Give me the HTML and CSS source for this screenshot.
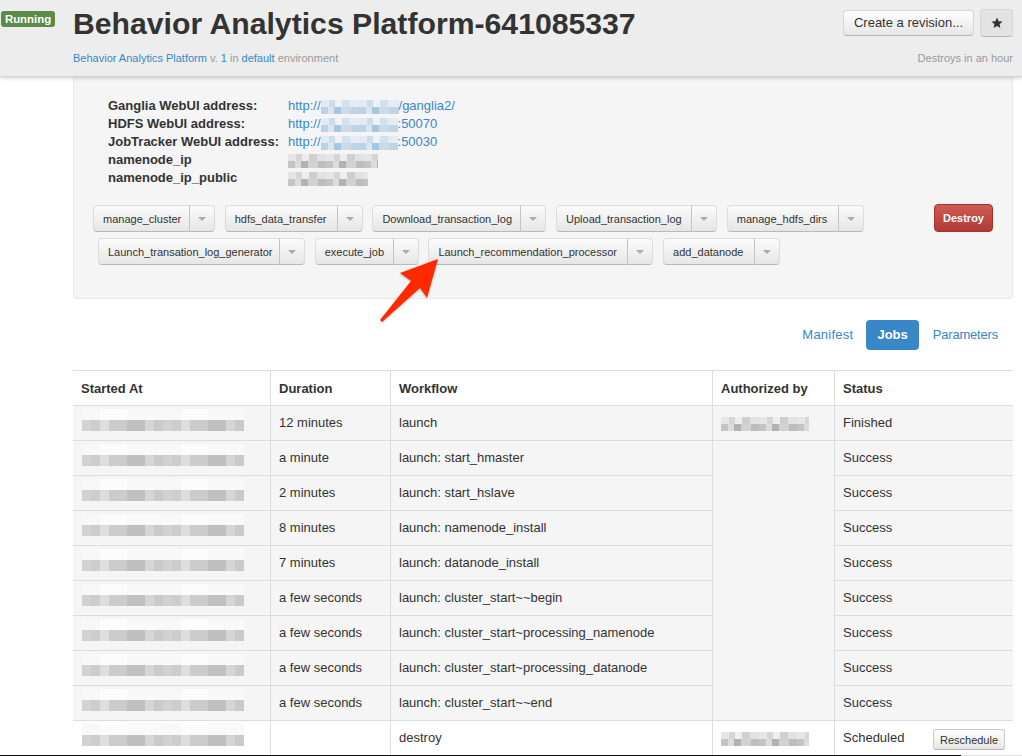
FILE: index.html
```html
<!DOCTYPE html>
<html lang="en">
<head>
    <meta charset="UTF-8">
    <title>Behavior Analytics Platform-641085337</title>
    <link rel="stylesheet" href="styles.css">
</head>
<body>
<div class="page">
    <header class="top">
        <div class="status-col"><span class="badge">Running</span></div>
        <div class="top-main">
            <h1>Behavior Analytics Platform-641085337</h1>
            <p class="sub"><a href="#">Behavior Analytics Platform</a> v. <a href="#">1</a> in <a href="#">default</a> environment</p>
        </div>
        <div class="top-side">
            <div class="top-buttons">
                <button class="btn btn-revision">Create a revision...</button>
                <button class="btn btn-star" aria-label="Favourite">
                    <svg width="12" height="12" viewBox="0 0 12 12"><polygon points="6,0.6 7.6,4.2 11.5,4.6 8.6,7.2 9.4,11.1 6,9.1 2.6,11.1 3.4,7.2 0.5,4.6 4.4,4.2" fill="#333"/></svg>
                </button>
            </div>
            <p class="destroys">Destroys in an hour</p>
        </div>
    </header>

    <section class="well">
        <div class="info">
            <div class="info-row"><b>Ganglia WebUI address:</b><span><a href="#">http://<i class="blur blur-blue w-ganglia"></i>/ganglia2/</a></span></div>
            <div class="info-row"><b>HDFS WebUI address:</b><span><a href="#">http://<i class="blur blur-blue w-port"></i>:50070</a></span></div>
            <div class="info-row"><b>JobTracker WebUI address:</b><span><a href="#">http://<i class="blur blur-blue w-port"></i>:50030</a></span></div>
            <div class="info-row"><b>namenode_ip</b><span><i class="blur w-ip"></i></span></div>
            <div class="info-row"><b>namenode_ip_public</b><span><i class="blur w-ip-public"></i></span></div>
        </div>
        <div class="actions">
            <div class="action-row">
                <div class="split"><button class="a-cluster">manage_cluster</button><button class="caret-btn"><span class="caret"></span></button></div>
                <div class="split"><button class="a-hdfs">hdfs_data_transfer</button><button class="caret-btn"><span class="caret"></span></button></div>
                <div class="split"><button class="a-download">Download_transaction_log</button><button class="caret-btn"><span class="caret"></span></button></div>
                <div class="split"><button class="a-upload">Upload_transaction_log</button><button class="caret-btn"><span class="caret"></span></button></div>
                <div class="split"><button class="a-dirs">manage_hdfs_dirs</button><button class="caret-btn"><span class="caret"></span></button></div>
                <button class="btn-danger">Destroy</button>
            </div>
            <div class="action-row action-row-2">
                <div class="split"><button class="a-generator">Launch_transation_log_generator</button><button class="caret-btn"><span class="caret"></span></button></div>
                <div class="split"><button class="a-execute">execute_job</button><button class="caret-btn"><span class="caret"></span></button></div>
                <div class="split"><button class="a-recommend">Launch_recommendation_processor</button><button class="caret-btn"><span class="caret"></span></button></div>
                <div class="split"><button class="a-add">add_datanode</button><button class="caret-btn"><span class="caret"></span></button></div>
            </div>
        </div>
    </section>

    <nav class="tabs">
        <a href="#" class="tab-manifest">Manifest</a>
        <a href="#" class="active">Jobs</a>
        <a href="#" class="tab-params">Parameters</a>
    </nav>

    <table class="jobs">
        <thead>
            <tr><th class="c1">Started At</th><th class="c2">Duration</th><th class="c3">Workflow</th><th class="c4">Authorized by</th><th>Status</th></tr>
        </thead>
        <tbody>
            <tr><td><i class="blur w-date"></i></td><td>12 minutes</td><td>launch</td><td><i class="blur w-user"></i></td><td>Finished</td></tr>
            <tr><td><i class="blur w-date"></i></td><td>a minute</td><td>launch: start_hmaster</td><td rowspan="8"></td><td>Success</td></tr>
            <tr><td><i class="blur w-date"></i></td><td>2 minutes</td><td>launch: start_hslave</td><td>Success</td></tr>
            <tr><td><i class="blur w-date"></i></td><td>8 minutes</td><td>launch: namenode_install</td><td>Success</td></tr>
            <tr><td><i class="blur w-date"></i></td><td>7 minutes</td><td>launch: datanode_install</td><td>Success</td></tr>
            <tr><td><i class="blur w-date"></i></td><td>a few seconds</td><td>launch: cluster_start~~begin</td><td>Success</td></tr>
            <tr><td><i class="blur w-date"></i></td><td>a few seconds</td><td>launch: cluster_start~processing_namenode</td><td>Success</td></tr>
            <tr><td><i class="blur w-date"></i></td><td>a few seconds</td><td>launch: cluster_start~processing_datanode</td><td>Success</td></tr>
            <tr><td><i class="blur w-date"></i></td><td>a few seconds</td><td>launch: cluster_start~~end</td><td>Success</td></tr>
            <tr class="plain"><td><i class="blur w-date"></i></td><td></td><td>destroy</td><td><i class="blur w-user"></i></td><td><div class="status-cell">Scheduled<button class="btn-small">Reschedule</button></div></td></tr>
        </tbody>
    </table>

    <!-- annotation drawn over the screenshot -->
    <svg class="arrow" width="70" height="72" viewBox="375 255 70 72">
        <polygon points="438,259 427,298 420,288 382,322 380,320 411,281 400,273" fill="#ff2a00"/>
    </svg>
</div>
</body>
</html>
```

FILE: styles.css
```css
html, body {
    height: 100%;
    margin: 0;
    overflow: hidden;
}
body {
    background-color: #fff;
    color: #333;
    font-family: "Liberation Sans", Arial, sans-serif;
    font-size: 13px;
    line-height: 18px;
}
a {
    color: #3a87c8;
    text-decoration: none;
}
.page {
    position: relative;
    height: 755px;
    overflow: hidden;
    border-bottom: 1px solid;
    border-image: linear-gradient(90deg, #111 960px, #e2e2e2 960px) 1;
}

/* top bar */
.top {
    position: relative;
    z-index: 2;
    display: flex;
    height: 76px;
    background-color: #ededed;
    border-bottom: 1px solid #d4d4d4;
    box-shadow: 0 1px 4px rgba(0, 0, 0, 0.2);
}
.status-col {
    width: 73px;
    flex: none;
    padding: 11px 0 0 1px;
    box-sizing: border-box;
}
.badge {
    display: block;
    width: 54px;
    height: 16px;
    line-height: 16px;
    text-align: center;
    background-color: #5b8c4a;
    color: #fff;
    border-radius: 3px;
    font-size: 11.4px;
    font-weight: bold;
}
.top-main {
    flex: 1;
}
h1 {
    margin: 5px 0 0;
    font-size: 30.2px;
    line-height: 38px;
    font-weight: bold;
    color: #333;
}
.sub {
    margin: 6px 0 0;
    font-size: 11px;
    line-height: 18px;
    color: #999;
}
.top-side {
    width: 200px;
    padding-right: 9px;
    text-align: right;
}
.top-buttons {
    display: flex;
    justify-content: flex-end;
    gap: 6px;
    margin-top: 9px;
}
.btn {
    height: 27px;
    margin: 0;
    padding: 0;
    border: 1px solid #d6d6d6;
    border-bottom-color: #b8b8b8;
    border-radius: 4px;
    background: linear-gradient(#fff, #e6e6e6);
    color: #333;
    font-family: inherit;
    font-size: 13px;
}
.btn-revision {
    width: 131px;
    height: 26px;
    margin-top: 1px;
    padding-bottom: 2px;
}
.btn-star {
    width: 33px;
    height: 28px;
    background: #e3e3e3;
    display: flex;
    align-items: center;
    justify-content: center;
}
.destroys {
    margin: 12px 0 0;
    font-size: 11px;
    line-height: 18px;
    color: #999;
}

/* well with addresses and actions */
.well {
    height: 222px;
    box-sizing: border-box;
    margin: 0 9px 0 73px;
    padding: 20px 19px 0 19px;
    background-color: #f5f5f5;
    border: 1px solid #e8e8e8;
    border-top: none;
    border-radius: 0 0 4px 4px;
}
.info {
    padding-left: 15px;
}
.info-row {
    display: flex;
    height: 18px;
}
.info-row b {
    width: 180px;
    flex: none;
}
.actions {
    margin-top: 18px;
}
.action-row {
    display: flex;
    gap: 9.7px;
    margin-bottom: 6px;
    height: 27px;
}
.action-row-2 {
    padding-left: 5px;
}
.split {
    display: flex;
    height: 27px;
}
.split button {
    margin: 0;
    padding: 0 0 0 9px;
    box-sizing: border-box;
    border: 1px solid #dcdcdc;
    border-bottom-color: #b9b9b9;
    border-radius: 4px 0 0 4px;
    background: linear-gradient(#fbfbfb, #e6e6e6);
    color: #333;
    font-family: inherit;
    font-size: 11px;
    text-align: left;
    white-space: nowrap;
}
.a-cluster { width: 97px; }
.a-hdfs { width: 113px; }
.a-download { width: 149px; }
.a-upload { width: 136px; }
.a-dirs { width: 112px; }
.a-generator { width: 182px; }
.a-execute { width: 79px; }
.a-recommend { width: 200px; }
.a-add { width: 92px; }
.split .caret-btn {
    width: 26px;
    padding: 0;
    border-left: 1px solid #c4c4c4;
    border-radius: 0 4px 4px 0;
    margin-left: -1px;
    display: flex;
    align-items: center;
    justify-content: center;
}
.caret {
    width: 0;
    height: 0;
    border-top: 4px solid #aaa;
    border-left: 4px solid transparent;
    border-right: 4px solid transparent;
}
.btn-danger {
    margin: -1px 0 0 auto;
    width: 59px;
    height: 28px;
    padding: 0;
    border: 1px solid #a8322c;
    border-radius: 4px;
    background: linear-gradient(#d05a54, #ad3b35);
    color: #fff;
    font-family: inherit;
    font-size: 11px;
    font-weight: bold;
}

/* tabs */
.tabs {
    display: flex;
    justify-content: flex-end;
    align-items: center;
    margin: 21px 24px 20px 0;
    height: 30px;
    font-size: 13px;
}
.tabs a {
    line-height: 30px;
    border-radius: 4px;
}
.tabs .active {
    margin: 0 14px 0 13px;
    padding: 0 11px;
    background-color: #3a87c8;
    color: #fff;
    font-weight: bold;
}
.tab-manifest { letter-spacing: 0.25px; }
.tab-params { letter-spacing: -0.2px; }

/* jobs table */
.jobs {
    width: 940px;
    margin-left: 73px;
    border-collapse: collapse;
    table-layout: fixed;
    border-top: 1px solid #ddd;
}
.jobs th, .jobs td {
    height: 34px;
    padding: 0 8px;
    box-sizing: content-box;
    text-align: left;
    vertical-align: middle;
    border-top: 1px solid #ddd;
    border-left: 1px solid #ddd;
}
.jobs th {
    height: 32px;
    padding-top: 2px;
}
.jobs th:first-child, .jobs td:first-child {
    border-left: none;
}
.jobs tbody tr {
    background-color: #f5f5f5;
}
.jobs tbody tr.plain {
    background-color: #fff;
}
.c1 { width: 181px; }
.c2 { width: 103px; }
.c3 { width: 305px; }
.c4 { width: 105px; }
.status-cell {
    display: flex;
    justify-content: space-between;
    align-items: center;
}
.btn-small {
    width: 72px;
    height: 21px;
    margin: 3px 0 0;
    padding: 0;
    border: 1px solid #ccc;
    border-bottom-color: #b5b5b5;
    border-radius: 3px;
    background: linear-gradient(#fff, #e6e6e6);
    color: #333;
    font-family: inherit;
    font-size: 11px;
    flex: none;
}

/* pixelated parts of the screenshot */
.blur {
    display: inline-block;
    height: 14px;
    vertical-align: middle;
    filter: blur(0.7px);
    background-repeat: no-repeat;
    background-size: 100% 50%;
    background-position: top, bottom;
    background-image:
        repeating-linear-gradient(90deg, #e6e6e6 0 8px, #d6d6d6 8px 14px, #eee 14px 21px, #cfcfcf 21px 29px, #e2e2e2 29px 38px),
        repeating-linear-gradient(90deg, #c4c4c4 0 7px, #dcdcdc 7px 13px, #b2b2b2 13px 20px, #d2d2d2 20px 30px, #bdbdbd 30px 38px);
}
.blur-blue {
    background-image:
        repeating-linear-gradient(90deg, #e3eaf3 0 8px, #cddbeb 8px 14px, #eef2f7 14px 21px, #d3e0ee 21px 29px, #e6ecf4 29px 38px),
        repeating-linear-gradient(90deg, #bcd2e7 0 7px, #dbe5f0 7px 13px, #a9c6e1 13px 20px, #cbdbeb 20px 30px, #bfd4e8 30px 38px);
}
.w-ganglia { width: 78px; }
.w-port { width: 77px; }
.w-ip { width: 90px; }
.w-ip-public { width: 80px; }
.w-user { width: 88px; }
.w-date {
    width: 162px;
    height: 22px;
    margin: 0 0 6px 1px;
    filter: blur(0.4px);
    background-image:
        repeating-linear-gradient(90deg, #f8f8f8 0 18px, #fcfcfc 18px 45px, #f9f9f9 45px 81px),
        repeating-linear-gradient(90deg, #d2d2d2 0 9px, #cdcdcd 9px 18px, #dedede 18px 27px, #cccccc 27px 45px, #c0c0c0 45px 63px, #d6d6d6 63px 72px, #cacaca 72px 81px);
}

/* red annotation arrow */
.arrow {
    position: absolute;
    left: 375px;
    top: 255px;
    filter: drop-shadow(0 1px 1px rgba(0, 0, 0, 0.25));
}
```
